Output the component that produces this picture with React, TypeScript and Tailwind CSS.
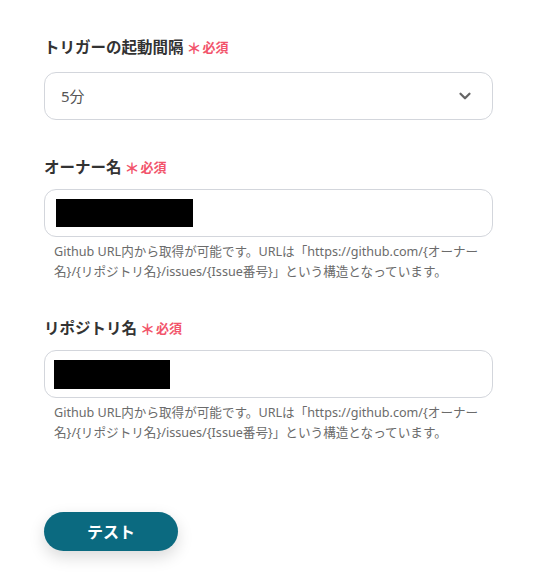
import { ChevronDown } from "lucide-react";

const FONT = { fontFamily: '"Noto Sans", "Noto Sans CJK JP", sans-serif' };

const Label = ({ text }: { text: string }) => (
  <div className="flex items-center gap-[3px] h-5">
    <span className="text-[15.5px] font-bold text-[#333]">{text}</span>
    <span className="text-[15px] font-bold text-[#f2546b] leading-none">＊</span>
    <span className="text-[13px] font-bold text-[#f2546b] -ml-[2px]">必須</span>
  </div>
);

const HELP =
  "Github URL内から取得が可能です。URLは「https://github.com/{オーナー名}/{リポジトリ名}/issues/{Issue番号}」という構造となっています。";

const HelpText = () => (
  <p className="mt-[5px] pl-[10px] pr-0 text-[12.6px] leading-[20px] text-[#6b6b6b]">{HELP}</p>
);

export default function App() {
  return (
    <div className="w-[547px] h-[585px] bg-white" style={FONT}>
      <div className="pl-[44px] pr-[54px] pt-[38px] flex flex-col">
        <Label text="トリガーの起動間隔" />
        <div className="mt-[14px] h-[48px] rounded-[12px] border border-[#d3d6dc] flex items-center justify-between pl-[16px] pr-[18px]">
          <span className="text-[15px] text-[#555]">5分</span>
          <ChevronDown size={18} strokeWidth={3} className="text-[#666]" />
        </div>

        <div className="mt-[38px]">
          <Label text="オーナー名" />
        </div>
        <div className="mt-[11px] h-[48px] rounded-[12px] border border-[#d3d6dc] flex items-center pl-[11px]">
          <div className="w-[137px] h-[28px] bg-black" />
        </div>
        <HelpText />

        <div className="mt-[37px]">
          <Label text="リポジトリ名" />
        </div>
        <div className="mt-[11px] h-[48px] rounded-[12px] border border-[#d3d6dc] flex items-center pl-[9px]">
          <div className="w-[116px] h-[29px] bg-black" />
        </div>
        <HelpText />

        <div className="mt-[69px]">
          <button className="w-[134px] h-[39px] rounded-full bg-[#0b6a80] text-white text-[16px] font-bold shadow-[0_6px_16px_rgba(0,0,0,0.15)]">
            テスト
          </button>
        </div>
      </div>
    </div>
  );
}
